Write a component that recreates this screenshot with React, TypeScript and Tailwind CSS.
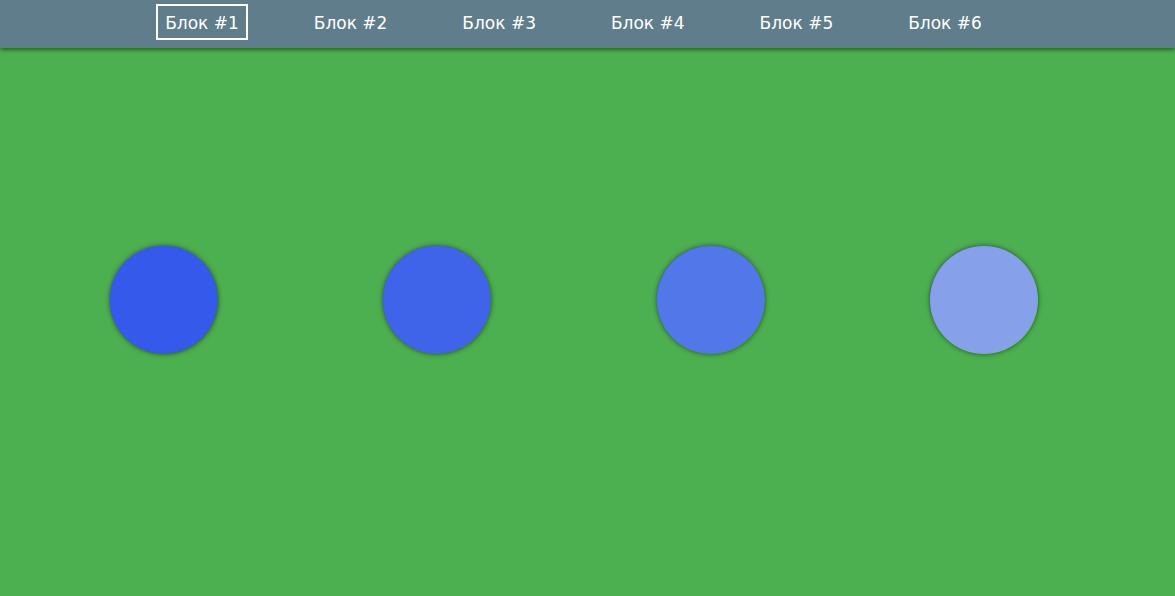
import React from "react";

const blocks = ["Блок #1", "Блок #2", "Блок #3", "Блок #4", "Блок #5", "Блок #6"];

const circles = ["bg-[#3559ea]", "bg-[#3f64e9]", "bg-[#5177e9]", "bg-[#86a0ea]"];

export default function App() {
  return (
    <div className="min-h-[596px] bg-[#4caf50] font-['DejaVu_Sans',sans-serif]">
      <nav className="relative z-10 h-12 bg-[#607d8b] shadow-[0_2px_4px_rgba(0,0,0,0.45)] flex items-start pt-1 pl-[156px] gap-[56.6px]">
        {blocks.map((b, i) => (
          <a
            key={b}
            className={`w-[92px] h-9 pt-[2px] flex items-center justify-center text-white text-[17px] leading-none border-2 ${
              i === 0 ? "border-white" : "border-transparent"
            }`}
          >
            {b}
          </a>
        ))}
      </nav>
      <div className="flex pl-[110px] pt-[198px] gap-[165.33px]">
        {circles.map((c) => (
          <div
            key={c}
            className={`w-[108px] h-[108px] rounded-full shrink-0 shadow-[0_0_5px_rgba(0,0,0,0.55)] ${c}`}
          />
        ))}
      </div>
    </div>
  );
}
